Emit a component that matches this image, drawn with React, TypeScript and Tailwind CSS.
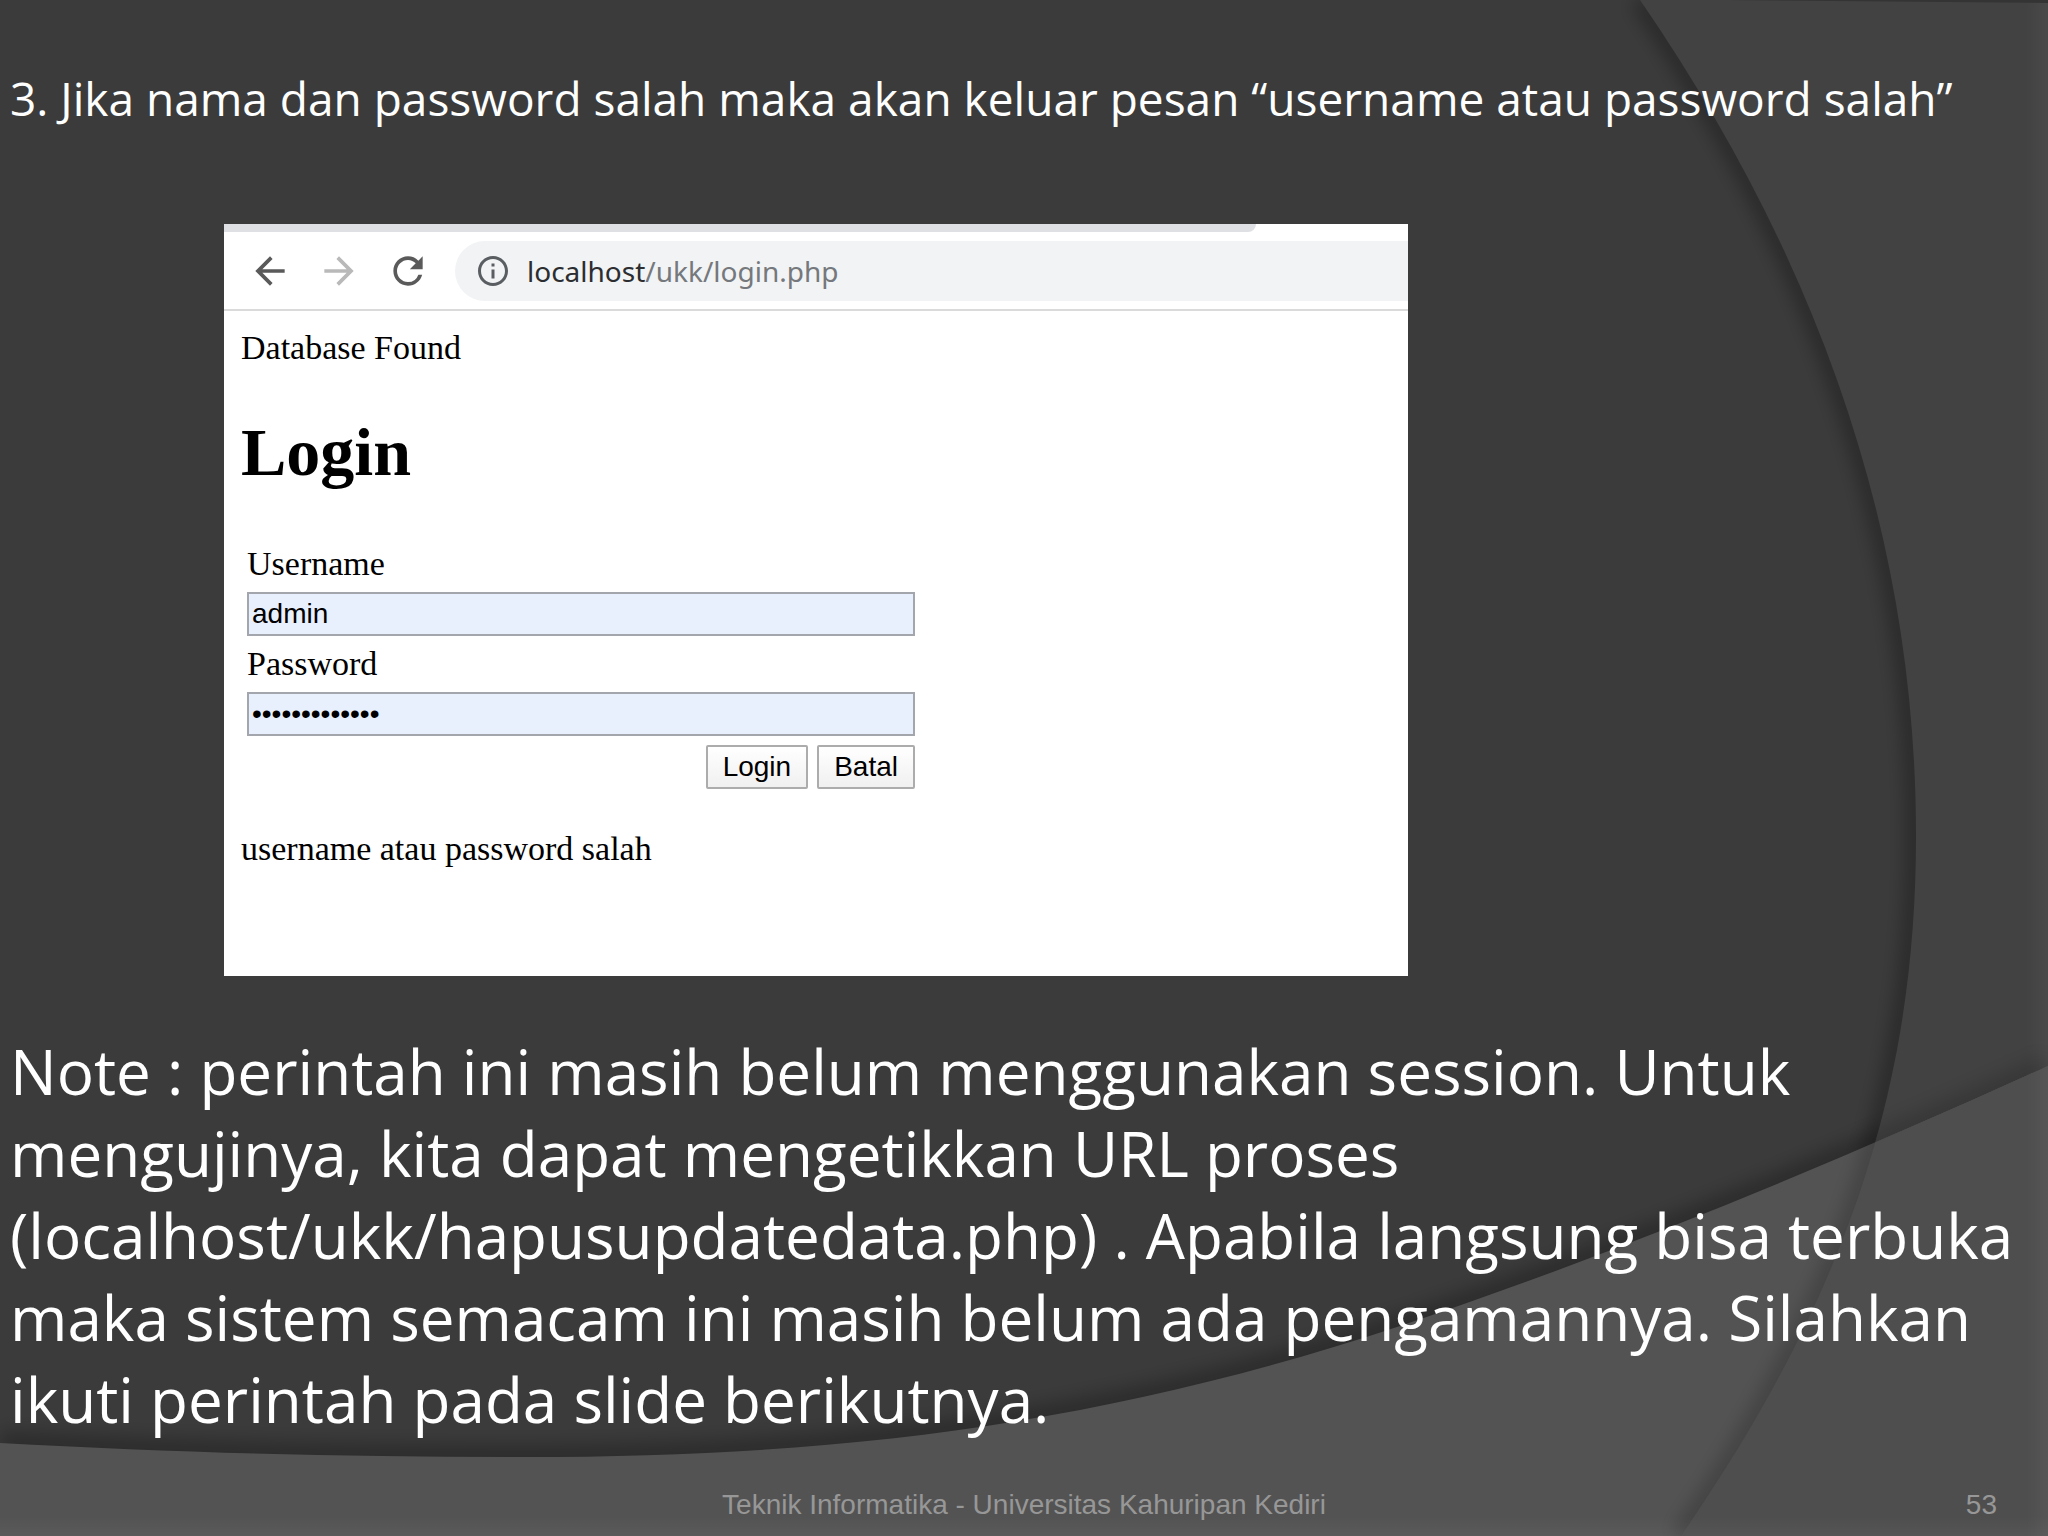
import { useState } from 'react'
import type { FormEvent } from 'react'
import { MdArrowBack, MdArrowForward, MdInfoOutline, MdRefresh } from 'react-icons/md'

const RIGHT_EDGE = 'M1640 0 C1815 255 1916 530 1916 836 C1916 1080 1850 1290 1685 1530 L1681 1536'
const RIGHT_SHAPE = `${RIGHT_EDGE} H2048 V0 Z`
const BOTTOM_EDGE =
  'M0 1443 C180 1453 350 1457 525 1457 C850 1457 1110 1422 1400 1326 C1620 1252 1830 1165 2048 1066'
const BOTTOM_SHAPE = `${BOTTOM_EDGE} V1536 H0 Z`

function SlideBackground() {
  return (
    <svg
      className="absolute inset-0 h-full w-full"
      viewBox="0 0 2048 1536"
      preserveAspectRatio="none"
      aria-hidden="true"
    >
      <defs>
        <filter id="soft" filterUnits="userSpaceOnUse" x="-60" y="-60" width="2168" height="1656">
          <feGaussianBlur stdDeviation="9" />
        </filter>
        <linearGradient id="rim" x1="0" x2="1" y1="0" y2="0">
          <stop offset="0" stopColor="#fff" stopOpacity="0" />
          <stop offset="1" stopColor="#fff" stopOpacity="0.04" />
        </linearGradient>
        <linearGradient id="floor" x1="0" x2="0" y1="0" y2="1">
          <stop offset="0" stopColor="#fff" stopOpacity="0" />
          <stop offset="1" stopColor="#fff" stopOpacity="0.04" />
        </linearGradient>
        <clipPath id="bottomClip">
          <path d={BOTTOM_SHAPE} />
        </clipPath>
        <clipPath id="rightClip">
          <path d={RIGHT_SHAPE} />
        </clipPath>
      </defs>

      <rect width="2048" height="1536" fill="#3b3b3b" />
      <path d={RIGHT_EDGE} fill="none" stroke="#000" strokeOpacity="0.3" strokeWidth="20" filter="url(#soft)" />
      <path d={BOTTOM_EDGE} fill="none" stroke="#000" strokeOpacity="0.26" strokeWidth="24" filter="url(#soft)" />
      <path d={RIGHT_SHAPE} fill="#424242" />
      <g clipPath="url(#rightClip)">
        <path d={BOTTOM_EDGE} fill="none" stroke="#000" strokeOpacity="0.16" strokeWidth="24" filter="url(#soft)" />
      </g>

      <path d={BOTTOM_SHAPE} fill="#535353" />
      <g clipPath="url(#bottomClip)">
        <path d={RIGHT_EDGE} fill="none" stroke="#000" strokeOpacity="0.22" strokeWidth="18" filter="url(#soft)" />
        <path d={RIGHT_SHAPE} fill="#4e4e4e" />
      </g>

      <path d="M1727 0 H2048 V3 Z" fill="#343434" />
      <rect x="2026" y="3" width="22" height="1533" fill="url(#rim)" />
      <rect y="1516" width="2048" height="20" fill="url(#floor)" />
    </svg>
  )
}

function Toolbar() {
  return (
    <div>
      <div className="h-2 w-[1032px] rounded-br-lg bg-[#dfe0e3]" />
      <div className="flex items-center border-b-2 border-[#dadada] pt-[9px] pb-2 pl-6">
        <div className="flex gap-[25px]">
          <button type="button" aria-label="Back" className="text-[#5a5a5a]">
            <MdArrowBack className="h-11 w-11" />
          </button>
          <button type="button" aria-label="Forward" className="text-[#b9b9b9]">
            <MdArrowForward className="h-11 w-11" />
          </button>
          <button type="button" aria-label="Reload" className="text-[#5a5a5a]">
            <MdRefresh className="h-11 w-11" />
          </button>
        </div>
        <div className="ml-[25px] flex h-[60px] flex-1 items-center gap-4 rounded-l-full bg-[#f1f3f4] pl-5">
          <MdInfoOutline className="h-9 w-9 text-[#5a5d61]" />
          <span className="font-['Noto_Sans',sans-serif] text-[28px] leading-10 text-[#75787c]">
            <span className="text-[#2c2d30]">localhost</span>/ukk/login.php
          </span>
        </div>
      </div>
    </div>
  )
}

function LoginForm() {
  const [username, setUsername] = useState('admin')
  const [password, setPassword] = useState('passwordsalah')

  const handleSubmit = (e: FormEvent) => {
    e.preventDefault()
  }

  const handleCancel = () => {
    setUsername('')
    setPassword('')
  }

  const field =
    "block h-11 w-full border-2 border-[#a3a7ad] bg-[#e8f0fe] px-[3px] font-['Liberation_Sans',sans-serif] text-[28px] text-black outline-none"
  const button =
    "h-11 rounded-[2px] border-2 border-[#acacac] bg-linear-to-b from-white to-[#f0f0f0] px-[15px] font-['Liberation_Sans',sans-serif] text-[28px] leading-10"

  return (
    <form onSubmit={handleSubmit} className="ml-1.5 w-[668px]">
      <label htmlFor="username" className="block h-14 leading-[56px]">
        Username
      </label>
      <input
        id="username"
        className={field}
        value={username}
        onChange={e => setUsername(e.target.value)}
      />
      <label htmlFor="password" className="block h-14 leading-[56px]">
        Password
      </label>
      <input
        id="password"
        type="password"
        className={field}
        value={password}
        onChange={e => setPassword(e.target.value)}
      />
      <div className="mt-[9px] flex justify-end gap-[9px]">
        <button type="submit" className={button}>
          Login
        </button>
        <button type="button" onClick={handleCancel} className={button}>
          Batal
        </button>
      </div>
    </form>
  )
}

function BrowserWindow() {
  return (
    <section className="ml-56 w-full max-w-[1184px] bg-white pb-[107px] text-black">
      <Toolbar />
      <div className="pl-[17px] font-['Liberation_Serif',serif] text-[34px]">
        <p className="pt-[17px] leading-10">Database Found</p>
        <h1 className="mt-12 mb-12 text-[68px] leading-[72px] font-bold">Login</h1>
        <LoginForm />
        <p className="mt-10 leading-10">username atau password salah</p>
      </div>
    </section>
  )
}

export default function App() {
  return (
    <main className="relative flex min-h-screen flex-col overflow-hidden bg-[#3b3b3b] font-['Liberation_Sans',sans-serif] text-white">
      <SlideBackground />
      <div className="relative flex flex-1 flex-col">
        <h2 className="px-2.5 pt-[70px] pb-[98px] font-['Open_Sans',sans-serif] text-[46px] leading-14">
          3. Jika nama dan password salah maka akan keluar pesan “username atau password salah”
        </h2>
        <BrowserWindow />
        <p className="mt-[54px] pr-1 pl-2.5 font-['Open_Sans',sans-serif] text-[62px] leading-[82px]">
          Note : perintah ini masih belum menggunakan session. Untuk mengujinya, kita dapat
          mengetikkan URL proses (localhost/ukk/hapusupdatedata.php) . Apabila langsung bisa terbuka
          maka sistem semacam ini masih belum ada pengamannya. Silahkan ikuti perintah pada slide
          berikutnya.
        </p>
        <footer className="mt-auto grid grid-cols-[1fr_auto_1fr] items-center px-[51px] pb-[13px] text-[28px] leading-9 text-[#979797]">
          <span className="col-start-2">Teknik Informatika - Universitas Kahuripan Kediri</span>
          <span className="text-right">53</span>
        </footer>
      </div>
    </main>
  )
}
